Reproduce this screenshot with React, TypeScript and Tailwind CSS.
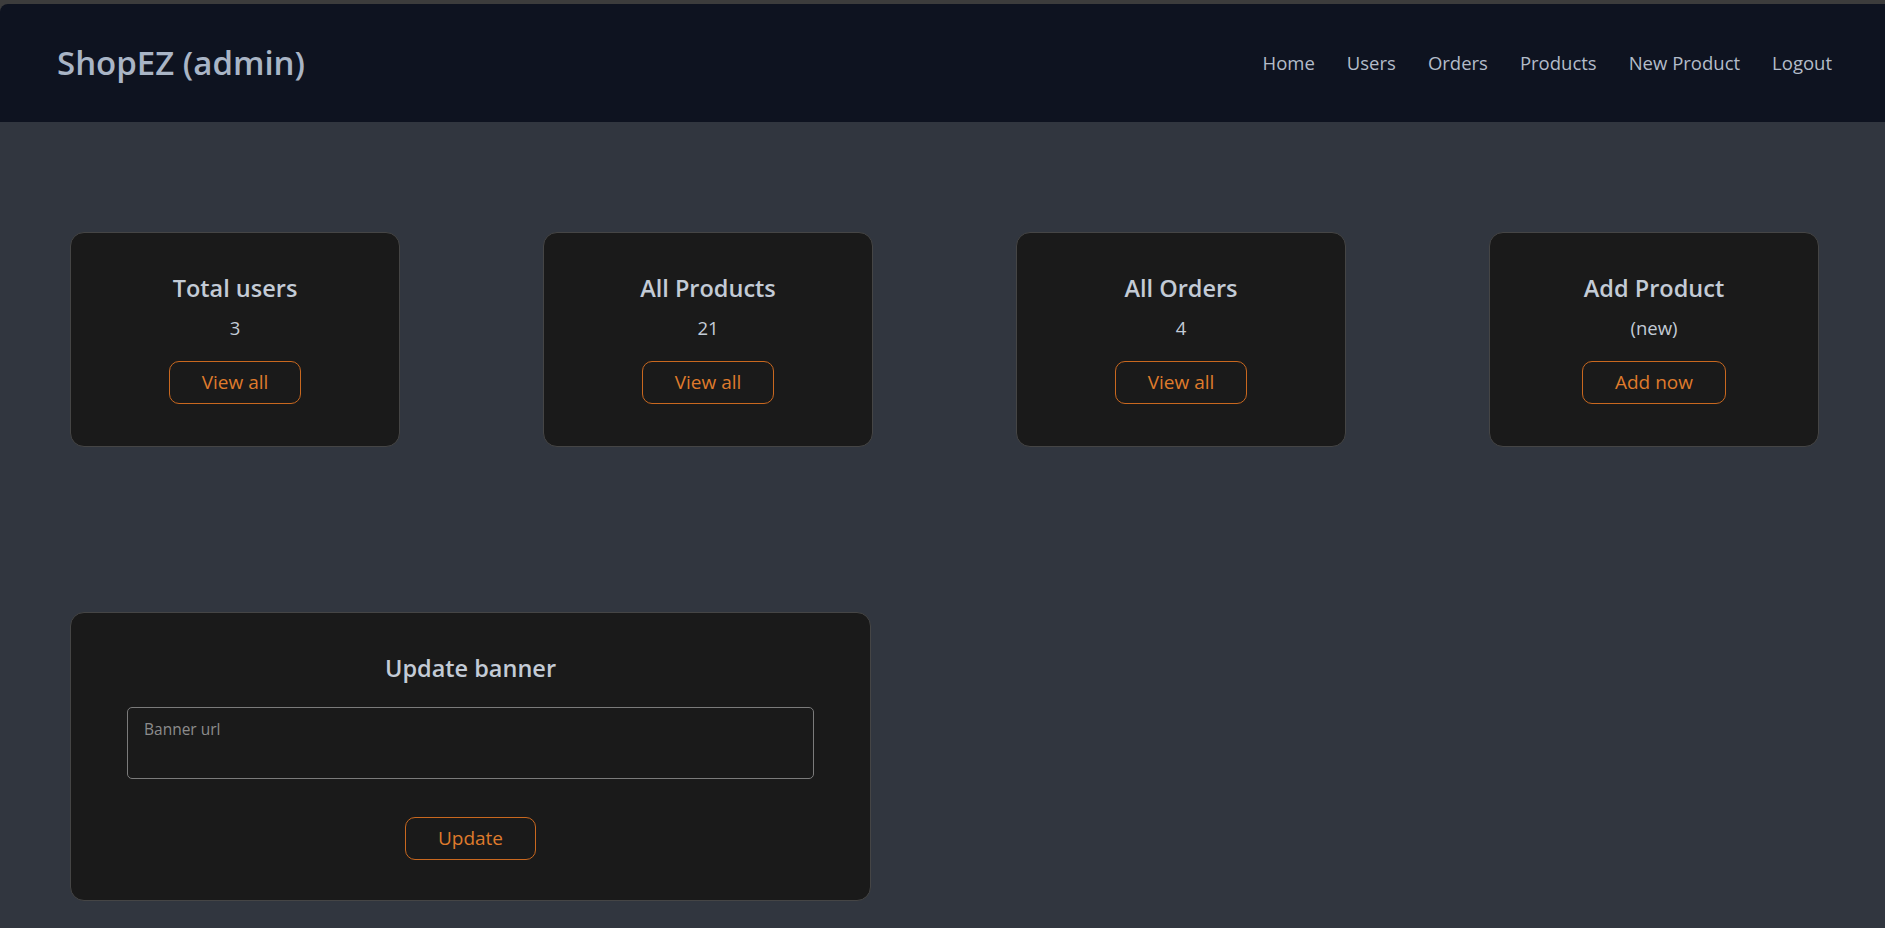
import React from 'react';

const stats = [
  { title: 'Total users', value: '3', action: 'View all' },
  { title: 'All Products', value: '21', action: 'View all' },
  { title: 'All Orders', value: '4', action: 'View all' },
  { title: 'Add Product', value: '(new)', action: 'Add now' },
];

const links = ['Home', 'Users', 'Orders', 'Products', 'New Product', 'Logout'];

function OutlineButton({ label }: { label: string }) {
  return (
    <button className="h-[43px] px-[32px] rounded-[10px] border border-[#c9681f] text-[19px] leading-none text-[#df7a2c]">
      {label}
    </button>
  );
}

export default function App() {
  return (
    <div className="min-h-screen bg-[#3c3c3c] pt-[4px] font-['Open_Sans','Noto_Sans',sans-serif]">
      <header className="h-[118px] bg-[#0e1320] rounded-tl-[8px] flex items-center justify-between pl-[57px] pr-[53px]">
        <span className="text-[33px] font-semibold text-[#a9b5c6]">ShopEZ (admin)</span>
        <nav className="flex gap-[32px] text-[18.5px] text-[#b3bcc9]">
          {links.map(l => (
            <a key={l} href="#" className="hover:text-white">{l}</a>
          ))}
        </nav>
      </header>

      <main className="bg-[#31363f] min-h-[806px] pl-[70px] pr-[66px] pt-[110px] pb-[28px]">
        <div className="flex justify-between">
          {stats.map(s => (
            <div key={s.title} className="w-[330px] h-[215px] rounded-[14px] border border-[#454545] bg-[#1a1a1a] flex flex-col items-center pt-[41px]">
              <h5 className="text-[23.5px] leading-[29px] font-semibold text-[#c3cbd6]">{s.title}</h5>
              <p className="mt-[10px] text-[18.5px] leading-[29px] text-[#c3cbd6]">{s.value}</p>
              <div className="mt-[19px]">
                <OutlineButton label={s.action} />
              </div>
            </div>
          ))}
        </div>

        <div className="mt-[165px] w-[801px] h-[289px] rounded-[14px] border border-[#454545] bg-[#1a1a1a] flex flex-col items-center px-[56px] pt-[41px]">
          <h5 className="text-[23.5px] leading-[29px] font-semibold text-[#c3cbd6]">Update banner</h5>
          <textarea
            placeholder="Banner url"
            className="mt-[24px] w-full h-[72px] resize-none rounded-[5px] border border-[#7b7b7b] bg-transparent pl-[16px] pt-[9px] text-[15.5px] leading-[24px] text-[#d0d0d0] placeholder:text-[#8c8c8c] outline-none"
          />
          <div className="mt-[38px]">
            <OutlineButton label="Update" />
          </div>
        </div>
      </main>
    </div>
  );
}
